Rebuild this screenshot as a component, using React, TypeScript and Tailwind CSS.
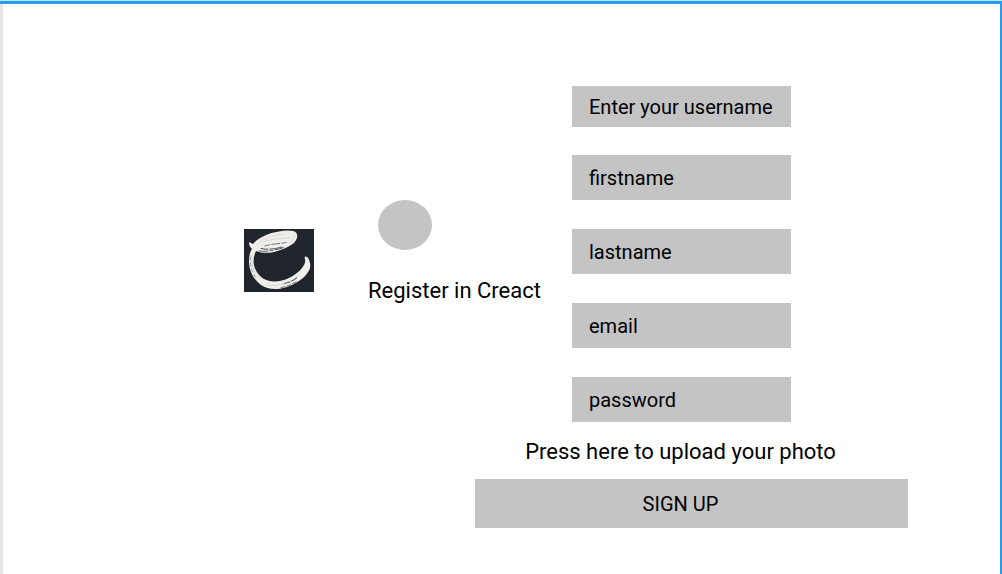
import { useState } from 'react';

const details = [
  { name: 'firstname', type: 'text' },
  { name: 'lastname', type: 'text' },
  { name: 'email', type: 'email' },
  { name: 'password', type: 'password' },
];

const fieldStyle =
  'block w-full rounded-none bg-[#c4c4c4] px-[17px] text-[20px] leading-6 text-black placeholder:text-black placeholder:opacity-100';

function Logo() {
  return (
    <svg viewBox="0 0 70 63" className="h-[63px] w-[70px]" role="img" aria-label="Creact">
      <rect width="70" height="63" fill="#20252b" />
      <path
        d="M5 13 L7 14 L9 15 C14 9 24 4 35 2.500 C42 1 50 1 52.500 4 C54 7 53 11 50 14 C45 18 38 21 30 23 C24 24.500 17 24 12 22 C10 26 9 31 10 36 C11 41 14 46 19 49.500 C25 53 32 53 38 51.500 C46 49.500 53 45 58 39 C61 35 62 32 60.500 28.500 C61 27 63 27.500 64 29 C67 34 67 39 64 43 C60 50 51 55 43 58 C34 61 24 61 17 56 C9 50 5 41 5 32 C5 27 6 23 8 20 C6 18 5 16 5 13 Z"
        fill="#efeeea"
      />
      <g fill="none" stroke="#20252b" strokeLinecap="round">
        <path d="M17 19.500 C23 21 31 20 38 18" strokeWidth="0.8" strokeDasharray="7 2 4 1" />
        <path d="M21 17 C28 14.500 35 15 42 13.500" strokeWidth="0.6" strokeDasharray="5 2 8 2" />
        <path d="M15 22 C23 23 32 21 40 18.500" strokeWidth="0.7" strokeDasharray="9 2 3 2" />
        <path d="M40 54.500 C46 53.500 50 51 54 48" strokeWidth="0.9" strokeDasharray="6 2" />
        <path d="M37 58.500 C43 57.500 48 55 53 52.500" strokeWidth="0.6" strokeDasharray="4 2" />
        <path d="M6.500 28 C5.500 35 8 43 12 49" strokeWidth="0.4" strokeDasharray="3 3" />
      </g>
      <g fill="none" stroke="#c9c8c3" strokeWidth="0.6">
        <path d="M13 15 C20 9 29 6 41 5" />
        <path d="M19 13.500 C26 10 33 10 45 8.500" />
        <path d="M49 5 C52 8 49 12 45 14.500" />
        <path d="M22 56 C32 58 44 55 55 46" />
        <path d="M8 25 C7 34 9 43 17 50" />
      </g>
    </svg>
  );
}

export default function App() {
  const [photo, setPhoto] = useState('');

  return (
    <div className="border-t border-[#b9e8fb] bg-white font-['Roboto',sans-serif] text-black">
      <div className="border-t-[3px] border-[#2f9be8]">
        <main className="flex min-h-[calc(100vh-4px)] justify-center border-r-2 border-l-[3px] border-r-[#2f9be8] border-l-[#e6e6e6] pl-[149px]">
          <form className="flex flex-col pt-[82px]" onSubmit={(event) => event.preventDefault()}>
            <div className="flex items-start">
              <div className="flex pt-[114px]">
                <div className="pt-[29px]">
                  <Logo />
                </div>
                <div className="ml-[54px] w-[204px]">
                  <div className="ml-[10px] h-[50px] w-[54px] rounded-[50%] bg-[#c4c4c4]" title={photo || undefined} />
                  <h1 className="mt-[27px] text-[22px] leading-7 whitespace-nowrap">Register in Creact</h1>
                </div>
              </div>
              <div className="flex w-[219px] flex-col gap-7">
                <input className={`${fieldStyle} h-[41px]`} name="username" placeholder="Enter your username" aria-label="Enter your username" />
                <div className="flex flex-col gap-[29px]">
                  {details.map(({ name, type }) => (
                    <input key={name} className={`${fieldStyle} h-[45px]`} name={name} type={type} placeholder={name} aria-label={name} />
                  ))}
                </div>
              </div>
            </div>
            <div className="ml-[231px] flex w-[433px] flex-col pt-4">
              <label className="mr-[22px] cursor-pointer text-center text-[22px] leading-7">
                Press here to upload your photo
                <input
                  type="file"
                  accept="image/*"
                  className="sr-only"
                  onChange={(event) => setPhoto(event.target.files?.[0]?.name ?? '')}
                />
              </label>
              <button type="submit" className="mt-[13px] h-[49px] cursor-pointer bg-[#c4c4c4] pr-[22px] text-[20px] leading-6">
                SIGN UP
              </button>
            </div>
          </form>
        </main>
      </div>
    </div>
  );
}
